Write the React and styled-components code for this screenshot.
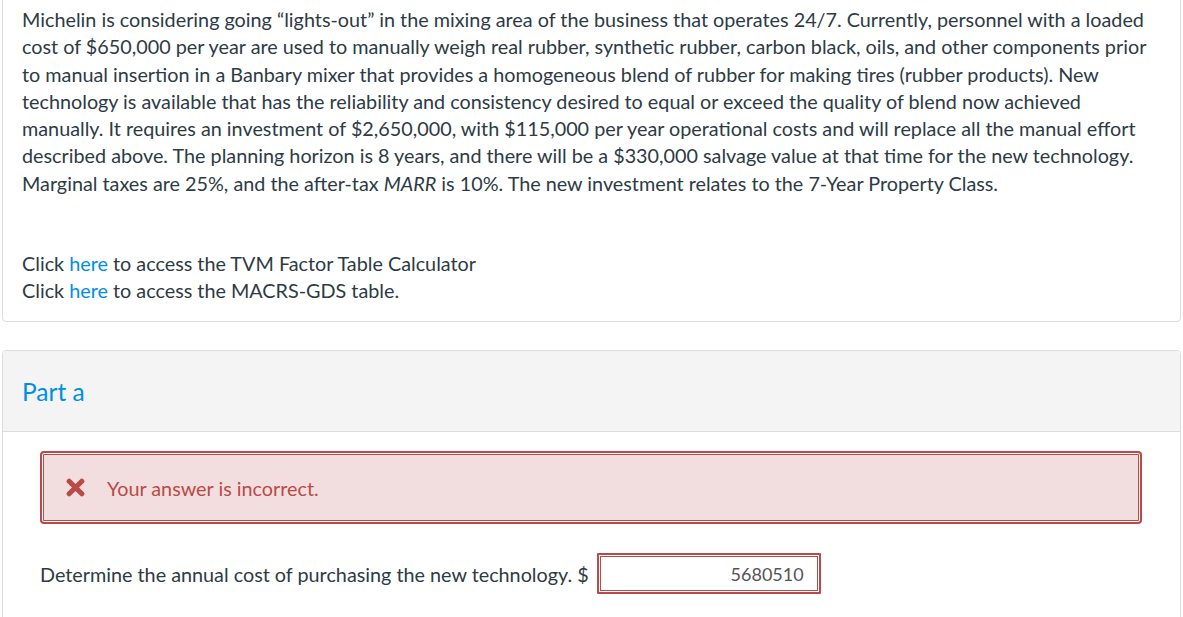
import React from "react";
import styled, { createGlobalStyle } from "styled-components";

const Global = createGlobalStyle`
  html, body {
    margin: 0;
    padding: 0;
    background: #fff;
    font-family: Lato, "Open Sans", sans-serif;
    color: #2d3b45;
    overflow: hidden;
  }
`;

const Page = styled.div`
  width: 1183px;
  height: 617px;
  overflow: hidden;
  padding: 0 2px;
  box-sizing: border-box;
`;

const Card = styled.section`
  border: 1px solid #dcdcdc;
  border-radius: 4px;
  background: #fff;
  margin-top: ${(p) => p.$top || 0}px;
  overflow: hidden;
`;

const Body = styled.div`
  padding: ${(p) => p.$pad};
`;

const Para = styled.div`
  font-size: 19.8px;
  line-height: 27.3px;
`;

const Line = styled.div`
  white-space: nowrap;
`;

const Links = styled.div`
  margin-top: 53px;
  font-size: 19.8px;
  line-height: 27px;
`;

const Link = styled.a`
  color: #008ee2;
  text-decoration: none;
`;

const Header = styled.div`
  background: #f4f4f4;
  border-bottom: 1px solid #dcdcdc;
  height: 80px;
  display: flex;
  align-items: center;
  padding-left: 19px;
`;

const PartTitle = styled.h2`
  margin: 0;
  font-weight: 400;
  font-size: 24.5px;
  color: #008ee2;
`;

const Alert = styled.div`
  display: flex;
  align-items: center;
  gap: 22px;
  height: 73px;
  box-sizing: border-box;
  margin-right: 38px;
  padding-left: 24px;
  background: #f2dede;
  border: 2px solid #b94a48;
  border-radius: 4px;
  box-shadow: inset 0 0 0 1px #fff, inset 0 0 0 2px #b94a48;
  color: #b94a48;
  font-size: 19.8px;
`;

const Question = styled.div`
  display: flex;
  align-items: center;
  margin-top: 29px;
  font-size: 19.8px;
`;

const Answer = styled.input`
  margin-left: 8px;
  width: 224px;
  height: 41px;
  box-sizing: border-box;
  border: 2px solid #b94a48;
  box-shadow: inset 0 0 0 1px #fff, inset 0 0 0 2px #b94a48;
  border-radius: 1px;
  text-align: right;
  padding: 0 15px 0 0;
  font-family: Lato, "Open Sans", sans-serif;
  font-size: 18px;
  color: #555;
  background: #fff;
  outline: none;
`;

function CrossIcon() {
  return (
    <svg width="19" height="19" viewBox="0 0 18 18">
      <path
        d="M3 3 L15 15 M15 3 L3 15"
        stroke="#b94a48"
        strokeWidth="4.8"
        strokeLinecap="round"
      />
    </svg>
  );
}

export default function App() {
  return (
    <Page>
      <Global />
      <Card $top={-17}>
        <Body $pad="22px 19px 17px 19px">
          <Para>
            <Line>
              Michelin is considering going “lights-out” in the mixing area of the business that operates 24/7. Currently, personnel with a loaded
            </Line>
            <Line>
              cost of $650,000 per year are used to manually weigh real rubber, synthetic rubber, carbon black, oils, and other components prior
            </Line>
            <Line>
              to manual insertion in a Banbary mixer that provides a homogeneous blend of rubber for making tires (rubber products). New
            </Line>
            <Line>
              technology is available that has the reliability and consistency desired to equal or exceed the quality of blend now achieved
            </Line>
            <Line>
              manually. It requires an investment of $2,650,000, with $115,000 per year operational costs and will replace all the manual effort
            </Line>
            <Line>
              described above. The planning horizon is 8 years, and there will be a $330,000 salvage value at that time for the new technology.
            </Line>
            <Line>
              Marginal taxes are 25%, and the after-tax <i>MARR</i> is 10%. The new investment relates to the 7-Year Property Class.
            </Line>
          </Para>
          <Links>
            <div>
              Click <Link href="#">here</Link> to access the TVM Factor Table Calculator
            </div>
            <div>
              Click <Link href="#">here</Link> to access the MACRS-GDS table.
            </div>
          </Links>
        </Body>
      </Card>
      <Card $top={28}>
        <Header>
          <PartTitle>Part a</PartTitle>
        </Header>
        <Body $pad="19px 0 200px 37px">
          <Alert>
            <CrossIcon />
            <span>Your answer is incorrect.</span>
          </Alert>
          <Question>
            <span>Determine the annual cost of purchasing the new technology. $</span>
            <Answer defaultValue="5680510" readOnly />
          </Question>
        </Body>
      </Card>
    </Page>
  );
}
